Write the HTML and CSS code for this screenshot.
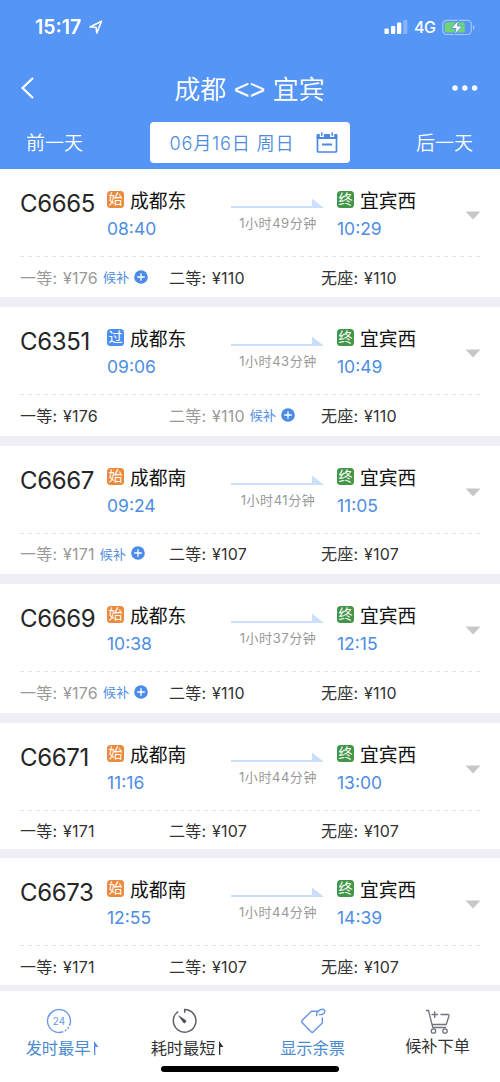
FILE: index.html
```html
<!DOCTYPE html>
<html lang="zh-CN">
<head>
<meta charset="utf-8">
<title>成都 - 宜宾</title>
<link rel="stylesheet" href="styles.css">
</head>
<body>
<svg class="defs" width="0" height="0">
  <symbol id="arrow" viewBox="0 0 93 12"><path d="M0 8H81V0.5L93 10H0Z" fill="#c9dffb"/></symbol>
  <symbol id="down" viewBox="0 0 16 9"><path d="M.5.5H15.5L8 8.5Z" fill="#c7c7c7"/></symbol>
  <symbol id="plus" viewBox="0 0 14 14"><circle cx="7" cy="7" r="6.8" fill="#4a8ce8"/><path d="M7 3.2V10.8M3.2 7H10.8" stroke="#fff" stroke-width="1.3"/></symbol>
  <symbol id="flag" viewBox="0 0 6 14"><path d="M1 14V0L5.5 6H2.3V14Z" fill="currentColor"/></symbol>
</svg>
<div class="screen">
  <header class="top">
    <div class="status">
      <span class="clock">15:17</span>
      <svg class="loc" width="14" height="15" viewBox="0 0 14 15"><path d="M1 7L12.5 1.2L7.8 13L7 7.2Z" fill="none" stroke="#fff" stroke-width="1.6" stroke-linejoin="round"/></svg>
      <svg class="signal" width="24" height="16" viewBox="0 0 24 16"><g fill="#fff"><rect x="0.5" y="9.5" width="4.3" height="5.5" rx="1"/><rect x="7" y="7" width="4.3" height="8" rx="1"/><rect x="13" y="3.5" width="4.3" height="11.5" rx="1"/><rect x="19.3" y="1" width="4" height="14" rx="1" opacity=".3"/></g></svg>
      <span class="net">4G</span>
      <svg class="battery" width="33" height="17" viewBox="0 0 33 17"><rect x=".8" y="1.3" width="28.5" height="14.2" rx="4" fill="none" stroke="#a5c7fa" stroke-width="1.2"/><path d="M31 6V11Q32.6 10 32.6 8.5T31 6Z" fill="#a5c7fa"/><rect x="2.8" y="3.3" width="20" height="10.2" rx="2" fill="#70d573"/><path d="M16.5 1L9.2 9.5H14L12.5 15.5L20.5 7H15.5Z" fill="#fff" stroke="#5695f3" stroke-width="1"/></svg>
    </div>
    <div class="nav">
      <svg class="back" width="16" height="24" viewBox="0 0 16 24"><path d="M13 2L2.5 12L13 22" fill="none" stroke="#fff" stroke-width="2.2"/></svg>
      <h1 class="title">成都 <span>&lt;&gt;</span> 宜宾</h1>
      <svg class="more" width="26" height="6" viewBox="0 0 26 6"><g fill="#fff"><circle cx="3" cy="3" r="2.7"/><circle cx="12.8" cy="3" r="2.7"/><circle cx="22.6" cy="3" r="2.7"/></g></svg>
    </div>
    <div class="dates">
      <span class="day">前一天</span>
      <div class="picker"><span>06月16日 周日</span>
        <svg width="22" height="22" viewBox="0 0 22 22"><path d="M1.5 3.5V19Q1.5 20 2.5 20H19.5Q20.5 20 20.5 19V3.5" fill="none" stroke="#4a89e2" stroke-width="1.7"/><path d="M.7 2H3.8V5H8V2H14V5H18.2V2H21.3V7H.7Z" fill="#4a89e2"/><path d="M5.8.5V3.8M16.2.5V3.8" stroke="#4a89e2" stroke-width="1.6"/><path d="M6 12.5H16" stroke="#4a89e2" stroke-width="2"/></svg>
      </div>
      <span class="day">后一天</span>
    </div>
  </header>
  <main class="list">
    <article class="card">
      <div class="trip">
        <div class="code">C6665</div>
        <div class="stop"><div class="station"><i class="tag start">始</i>成都东</div><time>08:40</time></div>
        <div class="span"><svg width="93" height="12"><use href="#arrow"/></svg><span>1小时49分钟</span></div>
        <div class="stop"><div class="station"><i class="tag end">终</i>宜宾西</div><time>10:29</time></div>
        <svg class="down" width="16" height="9"><use href="#down"/></svg>
      </div>
      <div class="seats"><div class="sold">一等: ¥176<b>候补</b><svg width="14" height="14"><use href="#plus"/></svg></div><div>二等: ¥110</div><div>无座: ¥110</div></div>
    </article>
    <article class="card">
      <div class="trip">
        <div class="code">C6351</div>
        <div class="stop"><div class="station"><i class="tag pass">过</i>成都东</div><time>09:06</time></div>
        <div class="span"><svg width="93" height="12"><use href="#arrow"/></svg><span>1小时43分钟</span></div>
        <div class="stop"><div class="station"><i class="tag end">终</i>宜宾西</div><time>10:49</time></div>
        <svg class="down" width="16" height="9"><use href="#down"/></svg>
      </div>
      <div class="seats"><div>一等: ¥176</div><div class="sold">二等: ¥110<b>候补</b><svg width="14" height="14"><use href="#plus"/></svg></div><div>无座: ¥110</div></div>
    </article>
    <article class="card">
      <div class="trip">
        <div class="code">C6667</div>
        <div class="stop"><div class="station"><i class="tag start">始</i>成都南</div><time>09:24</time></div>
        <div class="span"><svg width="93" height="12"><use href="#arrow"/></svg><span>1小时41分钟</span></div>
        <div class="stop"><div class="station"><i class="tag end">终</i>宜宾西</div><time>11:05</time></div>
        <svg class="down" width="16" height="9"><use href="#down"/></svg>
      </div>
      <div class="seats"><div class="sold">一等: ¥171<b>候补</b><svg width="14" height="14"><use href="#plus"/></svg></div><div>二等: ¥107</div><div>无座: ¥107</div></div>
    </article>
    <article class="card">
      <div class="trip">
        <div class="code">C6669</div>
        <div class="stop"><div class="station"><i class="tag start">始</i>成都东</div><time>10:38</time></div>
        <div class="span"><svg width="93" height="12"><use href="#arrow"/></svg><span>1小时37分钟</span></div>
        <div class="stop"><div class="station"><i class="tag end">终</i>宜宾西</div><time>12:15</time></div>
        <svg class="down" width="16" height="9"><use href="#down"/></svg>
      </div>
      <div class="seats"><div class="sold">一等: ¥176<b>候补</b><svg width="14" height="14"><use href="#plus"/></svg></div><div>二等: ¥110</div><div>无座: ¥110</div></div>
    </article>
    <article class="card compact">
      <div class="trip">
        <div class="code">C6671</div>
        <div class="stop"><div class="station"><i class="tag start">始</i>成都南</div><time>11:16</time></div>
        <div class="span"><svg width="93" height="12"><use href="#arrow"/></svg><span>1小时44分钟</span></div>
        <div class="stop"><div class="station"><i class="tag end">终</i>宜宾西</div><time>13:00</time></div>
        <svg class="down" width="16" height="9"><use href="#down"/></svg>
      </div>
      <div class="seats"><div>一等: ¥171</div><div>二等: ¥107</div><div>无座: ¥107</div></div>
    </article>
    <article class="card compact">
      <div class="trip">
        <div class="code">C6673</div>
        <div class="stop"><div class="station"><i class="tag start">始</i>成都南</div><time>12:55</time></div>
        <div class="span"><svg width="93" height="12"><use href="#arrow"/></svg><span>1小时44分钟</span></div>
        <div class="stop"><div class="station"><i class="tag end">终</i>宜宾西</div><time>14:39</time></div>
        <svg class="down" width="16" height="9"><use href="#down"/></svg>
      </div>
      <div class="seats"><div>一等: ¥171</div><div>二等: ¥107</div><div>无座: ¥107</div></div>
    </article>
  </main>
  <footer class="tabs">
    <div class="tab sort active">
      <svg width="26" height="26" viewBox="0 0 26 26"><circle cx="13" cy="13" r="11.5" fill="none" stroke="#689ae8" stroke-width="1.4" stroke-dasharray="2 1.5 2 1.5 2 1.5 61.8" transform="rotate(15 13 13)"/><text x="13" y="16.8" text-anchor="middle" class="hours">24</text></svg>
      <span>发时最早<svg class="flag early" width="6" height="14"><use href="#flag"/></svg></span>
    </div>
    <div class="tab sort">
      <svg width="26" height="26" viewBox="0 0 26 26"><path d="M7.2 3.5A11.3 11.3 0 1 0 13.7 1.5V4.8" fill="none" stroke="#5d6068" stroke-width="1.5"/><path d="M7.8 7.8L14.5 12.3A1.3 1.3 0 0 1 12.3 14.3Z" fill="#4c4e55" stroke="#4c4e55" stroke-width=".6"/></svg>
      <span>耗时最短<svg class="flag" width="6" height="14"><use href="#flag"/></svg></span>
    </div>
    <div class="tab active">
      <svg width="26" height="26" viewBox="0 0 26 26"><path d="M18.5 3.2H11.5L2 12.5Q1.2 13.5 2 14.5L11.3 24Q12.2 24.8 13 24L22.3 15V9.5M17 8.2C15.5 5 18.5 2 22 1.3C25.5 1 25.5 5 22.8 6.2C21.5 6.8 20.3 6.8 19 6.3" fill="none" stroke="#6795e5" stroke-width="1.4" stroke-linejoin="round"/></svg>
      <span>显示余票</span>
    </div>
    <div class="tab cart">
      <svg width="26" height="26" viewBox="0 0 26 26"><path d="M1 2.5H3.5L7.8 19.5H21M6.5 16.5H20.5Q21.3 16.5 21.5 15.5L24 8Q24.2 6.5 22.8 6.5H15.5M9.7 3.3V10M6.5 6.5H13" fill="none" stroke="#70737b" stroke-width="1.3"/><circle cx="8.5" cy="23" r="2.2" fill="none" stroke="#70737b" stroke-width="1.3"/><circle cx="20" cy="23" r="2.2" fill="none" stroke="#70737b" stroke-width="1.3"/></svg>
      <span>候补下单</span>
    </div>
    <div class="home"></div>
  </footer>
</div>
</body>
</html>
```
FILE: styles.css
```css
* { box-sizing: border-box; }
body { margin: 0; background: #fff; font-family: Inter, "Noto Sans CJK SC", sans-serif; color: #262626; }
svg { display: block; flex: none; }
.defs { position: absolute; }
.screen { width: 500px; height: 1082px; display: flex; flex-direction: column; overflow: hidden; }

.top { height: 169px; background: #5595f5; color: #fff; flex: none; }
.status { height: 54px; display: flex; align-items: center; padding: 0 25px 0 35px; }
.clock { font-size: 19.5px; font-weight: 600; width: 49px; white-space: nowrap; }
.loc { margin-left: 5px; }
.signal { margin-left: auto; }
.net { font-size: 16px; font-weight: 500; margin: 0 6px; letter-spacing: -0.4px; width: 22px; }
.nav { height: 68px; display: flex; align-items: center; justify-content: space-between; padding: 0 22px 0 20px; }
.title { margin: 3px 0 0 1px; font-size: 26px; line-height: 36px; font-weight: 350; white-space: nowrap; }
.title span { display: inline-block; width: 33px; text-align: center; font-family: "Liberation Sans", sans-serif; font-size: 27px; font-weight: 400; margin: 0 -0.5px; }
.back { margin-right: 10px; }
.dates { height: 41px; display: flex; align-items: center; justify-content: space-between; padding: 0 27px 0 26px; }
.day { font-size: 19px; font-weight: 350; line-height: 28px; margin-top: 3px; }
.picker { width: 200px; height: 41px; background: #fff; border-radius: 4px; color: #4d8bdc; display: flex; align-items: center; justify-content: space-between; padding: 0 12px 0 20px; font-size: 18.2px; letter-spacing: 0.75px; font-weight: 350; white-space: nowrap; }
.picker span { margin-bottom: 1px; }

.list { flex: none; height: 822px; background: #eeeef4; display: flex; flex-direction: column; gap: 10.2px; }
.card { height: 128.3px; flex: none; background: #fff; padding: 0 20px; }
.compact { height: 126.3px; }
.compact + .compact { margin-top: -1.2px; }
.trip { height: 88px; display: grid; grid-template-columns: 87px 124px 106px 128px 16px; border-bottom: 1px solid transparent; background: repeating-linear-gradient(90deg, #e6e6e6 0 4px, transparent 4px 8px) 0 100% / 100% 1px no-repeat border-box; }
.code { font-size: 24px; line-height: 30px; padding-top: 20px; letter-spacing: -0.35px; white-space: nowrap; }
.station { display: flex; align-items: center; gap: 7px; margin-top: 19px; height: 28px; font-size: 18.8px; line-height: 28px; color: #111; white-space: nowrap; }
.tag { width: 17px; height: 17px; border-radius: 3.5px; color: #fff; font-size: 14px; line-height: 16px; font-style: normal; text-align: center; margin-bottom: 5px; margin-right: -1px; }
.start { background: #eb8a3c; }
.pass { background: #4a8ff0; }
.end { background: #429647; }
time { display: block; font-size: 17.5px; line-height: 22px; margin-top: 2px; color: #4d8ee3; }
.span { padding-top: 29px; font-size: 13px; color: #999; white-space: nowrap; }
.span span { display: block; width: 94px; text-align: center; letter-spacing: 0.55px; line-height: 18px; margin-top: 4px; }
.down { margin: 42px 0 0 0; }
.seats { display: grid; grid-template-columns: 149px 152px 1fr; height: 40px; font-size: 16px; white-space: nowrap; color: #333; }
.seats div { display: flex; align-items: center; word-spacing: 0.8px; letter-spacing: 0.25px; margin-bottom: 1px; }
.seats .sold { color: #999; }
.sold b { font-size: 13px; font-weight: 400; color: #508de0; margin: 0 5px 0 5px; }

.tabs { flex: 1; background: #fff; display: grid; grid-template-columns: 125px 125px 125px 125px; position: relative; }
.tab { display: flex; flex-direction: column; align-items: center; padding-top: 17px; font-size: 16.2px; line-height: 24px; color: #333; }
.tab span { display: flex; align-items: center; margin-top: 2px; white-space: nowrap; }
.sort > svg { margin-right: 8px; }
.active { color: #4c8bd0; }
.cart span { margin-top: 0; }
.flag { margin-left: 3px; }
.early { color: #5a8cf0; }
.hours { font: 10px Inter, sans-serif; fill: #689ae8; }
.home { position: absolute; left: 161px; top: 75px; width: 178px; height: 6px; border-radius: 3px; background: #000; }
```
